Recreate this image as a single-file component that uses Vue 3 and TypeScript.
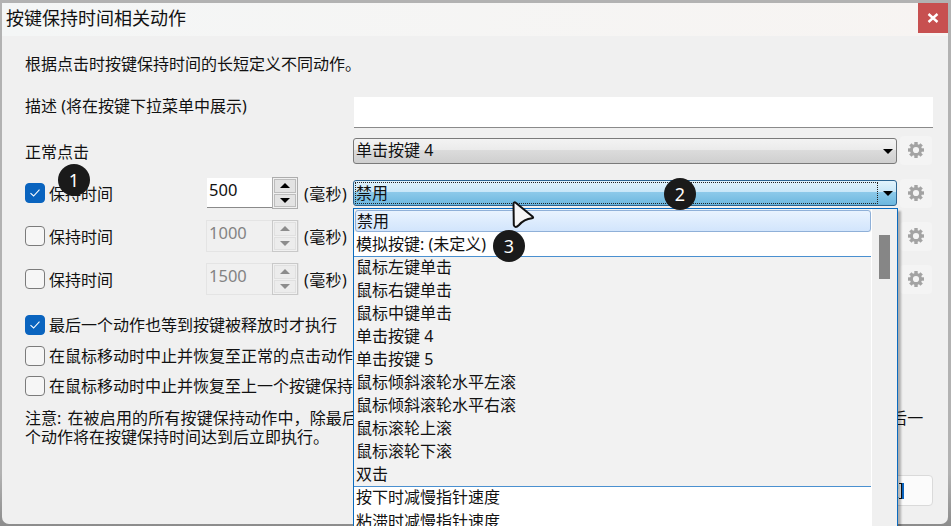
<script setup lang="ts">
const holds = [
  { value: '500', checked: true, disabled: false, combo: '禁用', active: true },
  { value: '1000', checked: false, disabled: true, combo: '', active: false },
  { value: '1500', checked: false, disabled: true, combo: '', active: false },
]
const options = [
  '鼠标左键单击', '鼠标右键单击', '鼠标中键单击', '单击按键 4', '单击按键 5',
  '鼠标倾斜滚轮水平左滚', '鼠标倾斜滚轮水平右滚', '鼠标滚轮上滚', '鼠标滚轮下滚', '双击',
]
const checks = [
  { label: '最后一个动作也等到按键被释放时才执行', checked: true },
  { label: '在鼠标移动时中止并恢复至正常的点击动作', checked: false },
  { label: '在鼠标移动时中止并恢复至上一个按键保持动作', checked: false },
]
const teeth = [0, 45, 90, 135, 180, 225, 270, 315]
const markers = [
  { n: 1, cls: 'm1' },
  { n: 2, cls: 'm2' },
  { n: 3, cls: 'm3' },
]
</script>

<template>
  <div class="screen">
    <div class="window">
      <div class="titlebar">
        <span class="title">按键保持时间相关动作</span>
        <span class="close">
          <svg width="12" height="10" viewBox="0 0 12 10"><path d="M1.5 1 L10.5 9 M10.5 1 L1.5 9" stroke="#fff" stroke-width="2.4" /></svg>
        </span>
      </div>
      <div class="body">
        <p class="intro">根据点击时按键保持时间的长短定义不同动作。</p>

        <div class="row desc-row">
          <span class="label wide">描述 (将在按键下拉菜单中展示)</span>
          <div class="text-input"></div>
        </div>

        <div class="row normal-row">
          <span class="label wide normal-label">正常点击</span>
          <div class="combo"><span class="combo-text">单击按键 4</span><i class="caret"></i></div>
          <div class="gear-btn">
            <svg width="16" height="16" viewBox="0 0 16 16">
              <rect v-for="t in teeth" :key="t" x="6.3" y="0" width="3.4" height="4" fill="#a3a3a3" :transform="`rotate(${t} 8 8)`" />
              <circle cx="8" cy="8" r="4.6" fill="none" stroke="#a3a3a3" stroke-width="3" />
            </svg>
          </div>
        </div>

        <div v-for="(h, i) in holds" :key="h.value" class="row hold-row">
          <label class="check-line hold-check">
            <span class="box" :class="{ on: h.checked }">
              <svg v-if="h.checked" width="12" height="10" viewBox="0 0 12 10"><path d="M1.5 5.2 L4.6 8 L10.5 1.6" fill="none" stroke="#fff" stroke-width="1.1" /></svg>
            </span>
            <span class="hold-text">保持时间</span>
          </label>
          <div class="spin" :class="{ off: h.disabled }">
            <span class="spin-value">{{ h.value }}</span>
            <div class="spin-btns">
              <span class="spin-btn"><i class="up"></i></span>
              <span class="spin-btn"><i class="down"></i></span>
            </div>
          </div>
          <span class="unit">(毫秒)</span>
          <div v-if="i === 0" class="combo active">
            <span class="combo-text">{{ h.combo }}</span>
            <i class="focus-rect"></i>
            <i class="caret"></i>
          </div>
          <div v-else class="combo"></div>
          <div class="gear-btn">
            <svg width="16" height="16" viewBox="0 0 16 16">
              <rect v-for="t in teeth" :key="t" x="6.3" y="0" width="3.4" height="4" fill="#a3a3a3" :transform="`rotate(${t} 8 8)`" />
              <circle cx="8" cy="8" r="4.6" fill="none" stroke="#a3a3a3" stroke-width="3" />
            </svg>
          </div>
        </div>

        <div class="checks">
          <label v-for="c in checks" :key="c.label" class="check-line">
            <span class="box" :class="{ on: c.checked }">
              <svg v-if="c.checked" width="12" height="10" viewBox="0 0 12 10"><path d="M1.5 5.2 L4.6 8 L10.5 1.6" fill="none" stroke="#fff" stroke-width="1.1" /></svg>
            </span>
            <span>{{ c.label }}</span>
          </label>
        </div>

        <p class="note">注意: <span class="note-main">在被启用的所有按键保持动作中，除最后一个动作外，其余动作都在按键被释放时才执行；若未勾选上述选项，则最后一</span><br />个动作将在按键保持时间达到后立即执行。</p>

        <div class="footer">
          <div class="ok-btn"><span>确定</span><i class="focus-mark"></i></div>
        </div>
      </div>
    </div>

    <div class="dropdown">
      <div class="list">
        <div class="item selected">禁用</div>
        <div class="item white first-white">模拟按键: (未定义)</div>
        <div class="group">
          <div v-for="o in options" :key="o" class="item">{{ o }}</div>
        </div>
        <div class="white-group">
          <div class="item">按下时减慢指针速度</div>
          <div class="item">粘滞时减慢指针速度</div>
        </div>
      </div>
      <div class="scrollbar"><span class="thumb"></span></div>
    </div>

    <svg class="cursor" width="30" height="32" viewBox="0 0 30 32">
      <path d="M3.5 3.5 Q4 1.5 6 3 L22.5 16.5 Q24 18 22 18.2 Q14 19 9 25 Q5 29 3.8 25 Z" fill="#f6f6f6" stroke="#111" stroke-width="2" stroke-linejoin="round" />
    </svg>

    <span v-for="m in markers" :key="m.n" class="marker" :class="m.cls">{{ m.n }}</span>
  </div>
</template>

<style>
html, body { margin: 0; background: #b2b2b2; }
</style>

<style scoped>
.screen {
  position: relative;
  width: 951px;
  height: 526px;
  overflow: hidden;
  box-sizing: border-box;
  padding: 3px 3px 2px 2px;
  font-family: "Noto Sans", "Noto Sans CJK SC", sans-serif;
  font-size: 16px;
  line-height: 20px;
  color: #111;
  background: linear-gradient(#b2b2b2 0 90%, #8c8c8c);
}
.window {
  height: 100%;
  display: flex;
  flex-direction: column;
  background: #f0f0f0;
  border-radius: 0 0 7px 7px;
}
.titlebar {
  height: 33px;
  flex: none;
  display: flex;
  justify-content: space-between;
  background: linear-gradient(90deg, #f4f6f6, #f7f4f2);
}
.title {
  font-size: 18px;
  line-height: 30px;
  padding-left: 4px;
}
.close {
  width: 30px;
  height: 30px;
  background: #c75050;
  display: flex;
  align-items: center;
  justify-content: center;
}
.body {
  flex: 1;
  display: flex;
  flex-direction: column;
  padding: 18px 15px 18px 23px;
  min-height: 0;
}
.intro { margin: 0; height: 20px; }
.row {
  display: grid;
  grid-template-columns: 181px 93px 54px 1fr 36px;
  align-items: center;
}
.label { white-space: nowrap; }
.wide { grid-column: 1 / span 3; }
.desc-row { margin-top: 23px; height: 31px; }
.desc-row .label { margin-top: -14px; }
.text-input {
  grid-column: 4 / span 2;
  height: 31px;
  margin-left: 1px;
  box-sizing: border-box;
  background: #fff;
  border-bottom: 1px solid #8a8a8a;
}
.normal-row { margin-top: 8px; height: 29px; }
.normal-label { margin-top: 2px; }
.hold-row { margin-top: 11px; height: 32px; }
.normal-row + .hold-row { margin-top: 12px; }
.combo {
  position: relative;
  height: 26px;
  box-sizing: border-box;
  border: 1px solid #7a7a7a;
  border-radius: 3px;
  background: linear-gradient(#f3f3f3, #ebebeb 44%, #dcdcdc 45%, #cfcfcf);
  padding-left: 2px;
  line-height: 23px;
  white-space: nowrap;
}
.combo.active {
  border-color: #2b6390;
  background: linear-gradient(#e2f3fc, #c9e7f8 44%, #8dcaea 45%, #6cb7df);
  line-height: 24px;
}
.caret {
  position: absolute;
  right: 3px;
  top: 10px;
  width: 0;
  height: 0;
  border-left: 5px solid transparent;
  border-right: 5px solid transparent;
  border-top: 5px solid #000;
}
.focus-rect {
  position: absolute;
  left: 1px;
  top: 1px;
  bottom: 1px;
  right: 18px;
  border: 1px dotted #222;
}
.gear-btn {
  justify-self: end;
  margin-right: 1px;
  width: 32px;
  height: 29px;
  border-radius: 4px;
  background: #f4f4f4;
  display: flex;
  align-items: center;
  justify-content: center;
}
.gear-btn svg { margin-top: -1px; }
.check-line {
  display: flex;
  align-items: center;
  gap: 4px;
  white-space: nowrap;
}
.hold-text { padding-top: 2px; }
.box {
  flex: none;
  width: 20px;
  height: 20px;
  box-sizing: border-box;
  border: 1px solid #7b7b7b;
  border-radius: 4px;
  background: #f6f6f6;
  display: flex;
  align-items: center;
  justify-content: center;
}
.box.on { background: #0a64bf; border-color: #0a64bf; }
.spin {
  display: flex;
  height: 32px;
  box-sizing: border-box;
  border: 1px solid #f0f0f0;
}
.spin-value {
  flex: 1;
  background: #fff;
  border-bottom: 1px solid #8a8a8a;
  padding: 1px 0 0 2px;
  line-height: 22px;
  font-size: 16.5px;
}
.spin-btns {
  width: 26px;
  box-sizing: border-box;
  border: 1px solid #adadad;
  margin: -1px 0;
  padding: 1px;
  display: flex;
  flex-direction: column;
  gap: 1px;
}
.spin-btn {
  flex: 1;
  background: #e3e3e3;
  border: 1px solid #bdbdbd;
  display: flex;
  align-items: center;
  justify-content: center;
}
.up, .down {
  width: 0;
  height: 0;
  border-left: 5px solid transparent;
  border-right: 5px solid transparent;
}
.up { border-bottom: 5px solid #000; }
.down { border-top: 5px solid #000; }
.spin.off { border-color: #e4e4e4; }
.spin.off .spin-value {
  background: #f0f0f0;
  border-bottom: 0;
  color: #838383;
}
.spin.off .spin-btns { border-color: #c9c9c9; }
.spin.off .spin-btn { background: #ececec; border-color: #e0e0e0; }
.spin.off .up { border-bottom-color: #8c8c8c; }
.spin.off .down { border-top-color: #8c8c8c; }
.unit { padding: 2px 0 0 5px; white-space: nowrap; letter-spacing: 0.4px; }
.checks {
  margin-top: 20px;
  display: flex;
  flex-direction: column;
  gap: 10.5px;
}
.note {
  margin: 13px 0 0;
  line-height: 19px;
  white-space: nowrap;
}
.note-main {
  margin-left: 2px;
  letter-spacing: 0.15px;
}
.footer {
  margin-top: auto;
  display: flex;
  justify-content: flex-end;
}
.ok-btn {
  width: 118px;
  height: 31px;
  box-sizing: border-box;
  border: 1px solid #dadada;
  border-radius: 4px;
  background: #fbfbfb;
  padding-right: 30px;
  display: flex;
  align-items: center;
  justify-content: flex-end;
}
.focus-mark {
  width: 2px;
  height: 14px;
  border: solid #111;
  border-width: 1px 1px 1px 0;
  box-shadow: 2px 0 0 #0a64bf;
}
.dropdown {
  position: absolute;
  left: 353px;
  top: 208px;
  width: 545px;
  height: 340px;
  box-sizing: border-box;
  border: 1px solid #0a6bc0;
  background: #f0f0f0;
  box-shadow: 3px 3px 2px rgba(0, 0, 0, 0.28);
  display: flex;
}
.list {
  width: 517px;
  flex: none;
  background: #f2f2f2;
  border-right: 1px solid #fff;
}
.item {
  height: 23px;
  line-height: 22px;
  padding-left: 2px;
  white-space: nowrap;
}
.item.selected {
  height: 22px;
  margin: 1px 0 0 1px;
  box-sizing: border-box;
  border: 1px solid #8fb0d8;
  border-radius: 3px;
  background: linear-gradient(#e9f3fe, #d2e5fc);
  line-height: 21px;
  padding-left: 1px;
}
.item.white {
  height: 24px;
  line-height: 25px;
  background: #fff;
  border-bottom: 1px solid #4a90d0;
  position: relative;
}
.group { margin-top: -1px; }
.white-group {
  background: #fff;
  border-top: 1px solid #4a90d0;
  height: 60px;
}
.white-group .item:first-child { line-height: 21px; }
.scrollbar {
  flex: 1;
  position: relative;
  background: #f0f0f0;
}
.thumb {
  position: absolute;
  left: 7px;
  top: 26px;
  width: 11px;
  height: 44px;
  background: #868686;
}
.cursor {
  position: absolute;
  left: 510px;
  top: 200px;
}
.marker {
  position: absolute;
  width: 32px;
  height: 32px;
  border-radius: 50%;
  background: #1a1a1a;
  color: #fff;
  font-size: 18px;
  line-height: 32px;
  text-align: center;
}
.m1 { left: 58px; top: 164px; }
.m2 { left: 664px; top: 178px; }
.m3 { left: 493px; top: 230px; }
</style>
